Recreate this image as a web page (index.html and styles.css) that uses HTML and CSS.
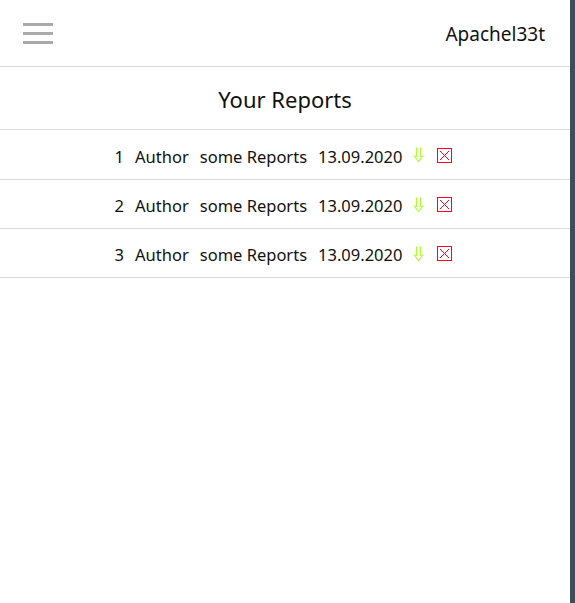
FILE: index.html
```html
<!DOCTYPE html>
<html lang="en">
<head>
<meta charset="utf-8">
<title>Your Reports</title>
<link rel="stylesheet" href="styles.css">
</head>
<body>
<div class="app">
  <header class="topbar">
    <button class="burger" aria-label="Menu">
      <span class="bar"></span><span class="bar"></span><span class="bar"></span>
    </button>
    <div class="user">Apachel33t</div>
  </header>
  <h1 class="title">Your Reports</h1>
  <ul class="reports">
    <li class="report"><span>1</span><span>Author</span><span>some Reports</span><span>13.09.2020</span>
      <svg class="dl" width="11" height="16" viewBox="0 0 11 16" aria-label="download"><path d="M3.5 0.5V10M7.5 0.5V10M0.8 8.5L5.5 14.6L10.2 8.5" fill="none" stroke="currentColor" stroke-width="1.2"/></svg>
      <svg class="del" width="15" height="15" viewBox="0 0 15 15" aria-label="delete"><rect x="0.5" y="0.5" width="14" height="14" fill="none" stroke="currentColor"/><path d="M3 3L12 12M12 3L3 12" stroke="currentColor" stroke-width="1"/></svg></li>
    <li class="report"><span>2</span><span>Author</span><span>some Reports</span><span>13.09.2020</span>
      <svg class="dl" width="11" height="16" viewBox="0 0 11 16" aria-label="download"><path d="M3.5 0.5V10M7.5 0.5V10M0.8 8.5L5.5 14.6L10.2 8.5" fill="none" stroke="currentColor" stroke-width="1.2"/></svg>
      <svg class="del" width="15" height="15" viewBox="0 0 15 15" aria-label="delete"><rect x="0.5" y="0.5" width="14" height="14" fill="none" stroke="currentColor"/><path d="M3 3L12 12M12 3L3 12" stroke="currentColor" stroke-width="1"/></svg></li>
    <li class="report"><span>3</span><span>Author</span><span>some Reports</span><span>13.09.2020</span>
      <svg class="dl" width="11" height="16" viewBox="0 0 11 16" aria-label="download"><path d="M3.5 0.5V10M7.5 0.5V10M0.8 8.5L5.5 14.6L10.2 8.5" fill="none" stroke="currentColor" stroke-width="1.2"/></svg>
      <svg class="del" width="15" height="15" viewBox="0 0 15 15" aria-label="delete"><rect x="0.5" y="0.5" width="14" height="14" fill="none" stroke="currentColor"/><path d="M3 3L12 12M12 3L3 12" stroke="currentColor" stroke-width="1"/></svg></li>
  </ul>
</div>
<div class="edge"></div>
</body>
</html>
```
FILE: styles.css
```css
html, body {
  margin: 0;
  padding: 0;
  height: 100%;
}
body {
  display: flex;
  font-family: "Noto Sans", "Open Sans", sans-serif;
  color: #111;
  background: #fff;
}
.app {
  flex: 1;
  min-width: 0;
}
.edge {
  width: 5px;
  background: #37505c;
}
.topbar {
  height: 66px;
  border-bottom: 1px solid #dcdcdc;
  display: flex;
  align-items: center;
  justify-content: space-between;
  padding: 0 25px 0 23px;
}
.burger {
  display: flex;
  flex-direction: column;
  gap: 6px;
  padding: 0;
  margin: 0;
  border: 0;
  background: none;
  width: 30px;
}
.bar {
  display: block;
  height: 3px;
  width: 30px;
  background: #aaaaaa;
}
.user {
  font-size: 19px;
  margin-top: 1px;
}
.title {
  margin: 0;
  height: 61px;
  padding-top: 1px;
  border-bottom: 1px solid #dcdcdc;
  display: flex;
  align-items: center;
  justify-content: center;
  font-size: 22px;
  font-weight: 400;
}
.reports {
  list-style: none;
  margin: 0;
  padding: 0;
}
.report {
  height: 49px;
  padding: 3px 3px 0 0;
  box-sizing: border-box;
  border-bottom: 1px solid #dcdcdc;
  display: flex;
  align-items: center;
  justify-content: center;
  gap: 11px;
  font-size: 16.5px;
}
.report:first-child {
  height: 50px;
}
.dl {
  color: #adff2f;
  margin-left: 0;
  margin-top: -2px;
}
.del {
  color: #ff0022;
  margin-left: 2px;
  margin-top: -2px;
}
```
